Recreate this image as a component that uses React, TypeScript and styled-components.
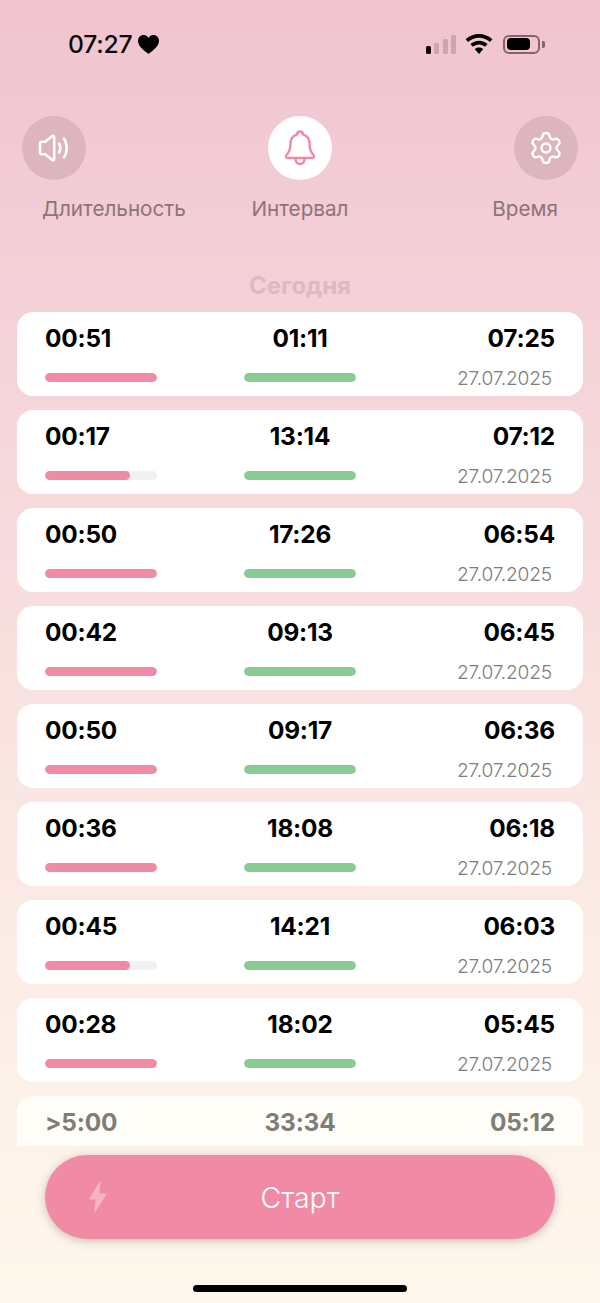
import React from 'react';
import styled, { createGlobalStyle } from 'styled-components';
import { Settings } from 'lucide-react';

const GlobalStyle = createGlobalStyle`
  html, body { margin: 0; padding: 0; }
  body { font-family: Inter, "Liberation Sans", sans-serif; }
`;

const Page = styled.div`
  width: 600px;
  height: 1303px;
  display: flex;
  flex-direction: column;
  overflow: hidden;
  background: linear-gradient(180deg, #f0c4d0 0%, #f4d2d8 25%, #f9e3e0 55%, #fdf2e9 85%, #fef7ec 100%);
`;

const StatusBar = styled.div`
  height: 88px;
  flex: none;
  display: flex;
  justify-content: space-between;
  align-items: center;
  padding: 0 55px 0 68px;
  box-sizing: border-box;
`;

const Clock = styled.div`
  display: flex;
  align-items: center;
  gap: 5px;
  font-size: 24.7px;
  font-weight: 500;
  letter-spacing: -0.2px;
  color: #0b0b0b;
`;

const StatusIcons = styled.div`
  display: flex;
  align-items: center;
  gap: 10px;
`;

const Signal = styled.div`
  display: flex;
  align-items: flex-end;
  justify-content: space-between;
  width: 30px;
  height: 19px;
  margin-right: -1px;
`;

const SignalBar = styled.div<{ $h: number; $on?: boolean }>`
  width: 5px;
  height: ${({ $h }) => $h}px;
  border-radius: 1.5px;
  background: ${({ $on }) => ($on ? '#0b0b0b' : '#cfa4af')};
`;

const Battery = styled.div`
  width: 37px;
  height: 19px;
  box-sizing: border-box;
  border: 2px solid #86626c;
  border-radius: 6px;
  padding: 1.5px;
  display: flex;
`;

const BatteryFill = styled.div`
  width: 23px;
  background: #000;
  border-radius: 4px;
`;

const BatteryNub = styled.div`
  width: 3px;
  height: 7px;
  margin-left: -8px;
  border-radius: 0 2px 2px 0;
  background: #86626c;
`;

const Tabs = styled.div`
  flex: none;
  display: flex;
  justify-content: space-between;
  padding: 28px 22px 0;
`;

const Tab = styled.div<{ $side: 'start' | 'center' | 'end' }>`
  display: flex;
  flex-direction: column;
  gap: 16px;
  width: 185px;
  align-items: ${({ $side }) => ($side === 'center' ? 'center' : `flex-${$side}`)};
`;

const TabCircle = styled.div<{ $active?: boolean }>`
  width: 64px;
  height: 64px;
  border-radius: 50%;
  display: flex;
  align-items: center;
  justify-content: center;
  color: ${({ $active }) => ($active ? '#ee8aa4' : '#fff')};
  background: ${({ $active }) => ($active ? '#fff' : '#dcb5bf')};
`;

const TabLabel = styled.div<{ $side: 'start' | 'center' | 'end' }>`
  font-size: 20.7px;
  line-height: 26px;
  color: #8f7279;
  margin: 0 ${({ $side }) => ($side === 'end' ? '20px' : '0')} 0 ${({ $side }) => ($side === 'start' ? '20px' : '0')};
`;

const DayTitle = styled.div`
  flex: none;
  margin-top: 50px;
  height: 28px;
  line-height: 28px;
  text-align: center;
  font-size: 24px;
  font-weight: 700;
  color: #e0b7c2;
`;

const List = styled.div`
  flex: none;
  height: 834px;
  margin-top: 12px;
  padding: 0 17px;
  display: flex;
  flex-direction: column;
  gap: 14px;
  overflow: hidden;
`;

const Card = styled.div<{ $faded?: boolean }>`
  flex: none;
  height: 84px;
  box-sizing: border-box;
  padding: 11px 28px 0;
  border-radius: 16px;
  background: ${({ $faded }) => ($faded ? '#fffdf8' : '#fff')};
  display: grid;
  grid-template-columns: 1fr 1fr 1fr;
`;

const Column = styled.div<{ $align: 'flex-start' | 'center' | 'flex-end' }>`
  display: flex;
  flex-direction: column;
  align-items: ${({ $align }) => $align};
`;

const Time = styled.div<{ $faded?: boolean }>`
  font-size: 24.4px;
  line-height: 30px;
  font-weight: 700;
  letter-spacing: -0.2px;
  color: ${({ $faded }) => ($faded ? '#807d76' : '#000')};
`;

const Track = styled.div`
  width: 112px;
  height: 9px;
  margin-top: 20px;
  border-radius: 5px;
  background: #f1f1f1;
  overflow: hidden;
`;

const Fill = styled.div<{ $color: string }>`
  height: 100%;
  border-radius: 5px;
  background: ${({ $color }) => $color};
`;

const DateLabel = styled.div`
  font-size: 19.2px;
  line-height: 24px;
  margin-top: 13px;
  margin-right: 3px;
  letter-spacing: -0.2px;
  font-weight: 300;
  color: #7d7d7d;
`;

const Footer = styled.div`
  flex: 1;
  display: flex;
  flex-direction: column;
  align-items: center;
  padding-top: 9px;
`;

const StartButton = styled.div`
  width: 510px;
  height: 84px;
  flex: none;
  border-radius: 42px;
  background: #f18ba5;
  box-shadow: 0 2px 10px rgba(90, 60, 60, 0.3);
  display: grid;
  grid-template-columns: 1fr auto 1fr;
  align-items: center;
  padding: 0 44px;
  box-sizing: border-box;
  color: #fff;
  font-size: 28.5px;
  font-weight: 300;
`;

const Bolt = styled.svg`
  width: 18px;
  height: 34px;
`;

const HomeBar = styled.div`
  width: 214px;
  height: 7px;
  margin-top: 46px;
  border-radius: 4px;
  background: #000;
`;

const rows = [
  { d: '00:51', i: '01:11', t: '07:25', p: 100 },
  { d: '00:17', i: '13:14', t: '07:12', p: 76 },
  { d: '00:50', i: '17:26', t: '06:54', p: 100 },
  { d: '00:42', i: '09:13', t: '06:45', p: 100 },
  { d: '00:50', i: '09:17', t: '06:36', p: 100 },
  { d: '00:36', i: '18:08', t: '06:18', p: 100 },
  { d: '00:45', i: '14:21', t: '06:03', p: 76 },
  { d: '00:28', i: '18:02', t: '05:45', p: 100 },
];

function SpeakerIcon() {
  return (
    <svg width="34" height="30" viewBox="0 0 34 30" fill="none" stroke="currentColor" strokeWidth="2.6" strokeLinecap="round" strokeLinejoin="round">
      <path d="M3 10.500c0-1 .7-1.700 1.700-1.700h3.400L15 3.200c.9-.7 2.200-.1 2.200 1.100v21.400c0 1.200-1.300 1.800-2.200 1.100l-6.900-5.600H4.700c-1 0-1.700-.7-1.700-1.700z" />
      <path d="M22 10.500c1.600 2.600 1.600 6.400 0 9" />
      <path d="M27 5.500c3.600 5.400 3.600 13.600 0 19" />
    </svg>
  );
}

function BellIcon() {
  return (
    <svg width="32" height="38" viewBox="0 0 32 38" fill="none" stroke="currentColor" strokeWidth="2.4" strokeLinecap="round" strokeLinejoin="round">
      <path d="M16 2.500c1.600 0 2.800 1.200 2.900 2.900 4.300 1.300 6.700 5 6.700 9.600 0 5 1.400 8.500 3.900 11 1.100 1.100.4 3-1.200 3H3.700c-1.600 0-2.300-1.900-1.200-3 2.500-2.500 3.900-6 3.900-11 0-4.600 2.400-8.300 6.700-9.600.1-1.700 1.300-2.900 2.900-2.900z" />
      <path d="M11.500 30c0 3 2 5 4.500 5s4.500-2 4.500-5" />
    </svg>
  );
}

function WifiIcon() {
  return (
    <svg width="28" height="20" viewBox="0 0 28 20" fill="#000">
      <path d="M14 0C8.800 0 4.200 2 .6 5.300l2.500 2.700C6 5.300 9.800 3.700 14 3.700s8 1.600 10.900 4.300l2.500-2.700C23.800 2 19.200 0 14 0z" />
      <path d="M14 6.700c-3.300 0-6.300 1.300-8.600 3.400l2.500 2.700c1.600-1.500 3.700-2.400 6.100-2.400s4.500.9 6.100 2.400l2.500-2.700c-2.300-2.100-5.300-3.400-8.600-3.400z" />
      <path d="M14 13.400c-1.700 0-3.200.6-4.300 1.700L14 20l4.300-4.900c-1.100-1.100-2.600-1.700-4.300-1.700z" />
    </svg>
  );
}

export default function App() {
  return (
    <Page>
      <GlobalStyle />
      <StatusBar>
        <Clock>
          07:27
          <svg width="21" height="19" viewBox="0 0 21 19" fill="#000">
            <path d="M10.500 19C4.500 14.500 0 10.700 0 5.800 0 2.400 2.500 0 5.600 0c2.100 0 3.900 1.100 4.900 3 1-1.900 2.800-3 4.900-3C18.500 0 21 2.400 21 5.800c0 4.900-4.500 8.700-10.500 13.200z" />
          </svg>
        </Clock>
        <StatusIcons>
          <Signal>
            <SignalBar $h={8} $on />
            <SignalBar $h={11} />
            <SignalBar $h={15} />
            <SignalBar $h={19} />
          </Signal>
          <WifiIcon />
          <Battery>
            <BatteryFill />
          </Battery>
          <BatteryNub />
        </StatusIcons>
      </StatusBar>

      <Tabs>
        <Tab $side="start">
          <TabCircle><SpeakerIcon /></TabCircle>
          <TabLabel $side="start">Длительность</TabLabel>
        </Tab>
        <Tab $side="center">
          <TabCircle $active><BellIcon /></TabCircle>
          <TabLabel $side="center">Интервал</TabLabel>
        </Tab>
        <Tab $side="end">
          <TabCircle><Settings size={36} strokeWidth={1.6} /></TabCircle>
          <TabLabel $side="end">Время</TabLabel>
        </Tab>
      </Tabs>

      <DayTitle>Сегодня</DayTitle>

      <List>
        {rows.map((row) => (
          <Card key={row.t}>
            <Column $align="flex-start">
              <Time>{row.d}</Time>
              <Track>
                <Fill $color="#f08aa5" style={{ width: `${row.p}%` }} />
              </Track>
            </Column>
            <Column $align="center">
              <Time>{row.i}</Time>
              <Track>
                <Fill $color="#89cb92" style={{ width: '100%' }} />
              </Track>
            </Column>
            <Column $align="flex-end">
              <Time>{row.t}</Time>
              <DateLabel>27.07.2025</DateLabel>
            </Column>
          </Card>
        ))}
        <Card $faded>
          <Column $align="flex-start"><Time $faded>&gt;5:00</Time></Column>
          <Column $align="center"><Time $faded>33:34</Time></Column>
          <Column $align="flex-end"><Time $faded>05:12</Time></Column>
        </Card>
      </List>

      <Footer>
        <StartButton>
          <Bolt viewBox="0 0 18 34" fill="#f6b3c5">
            <path d="M11.500 0 0 19.500h6.500L5 34 18 13.500h-7.500z" />
          </Bolt>
          <span>Старт</span>
        </StartButton>
        <HomeBar />
      </Footer>
    </Page>
  );
}
